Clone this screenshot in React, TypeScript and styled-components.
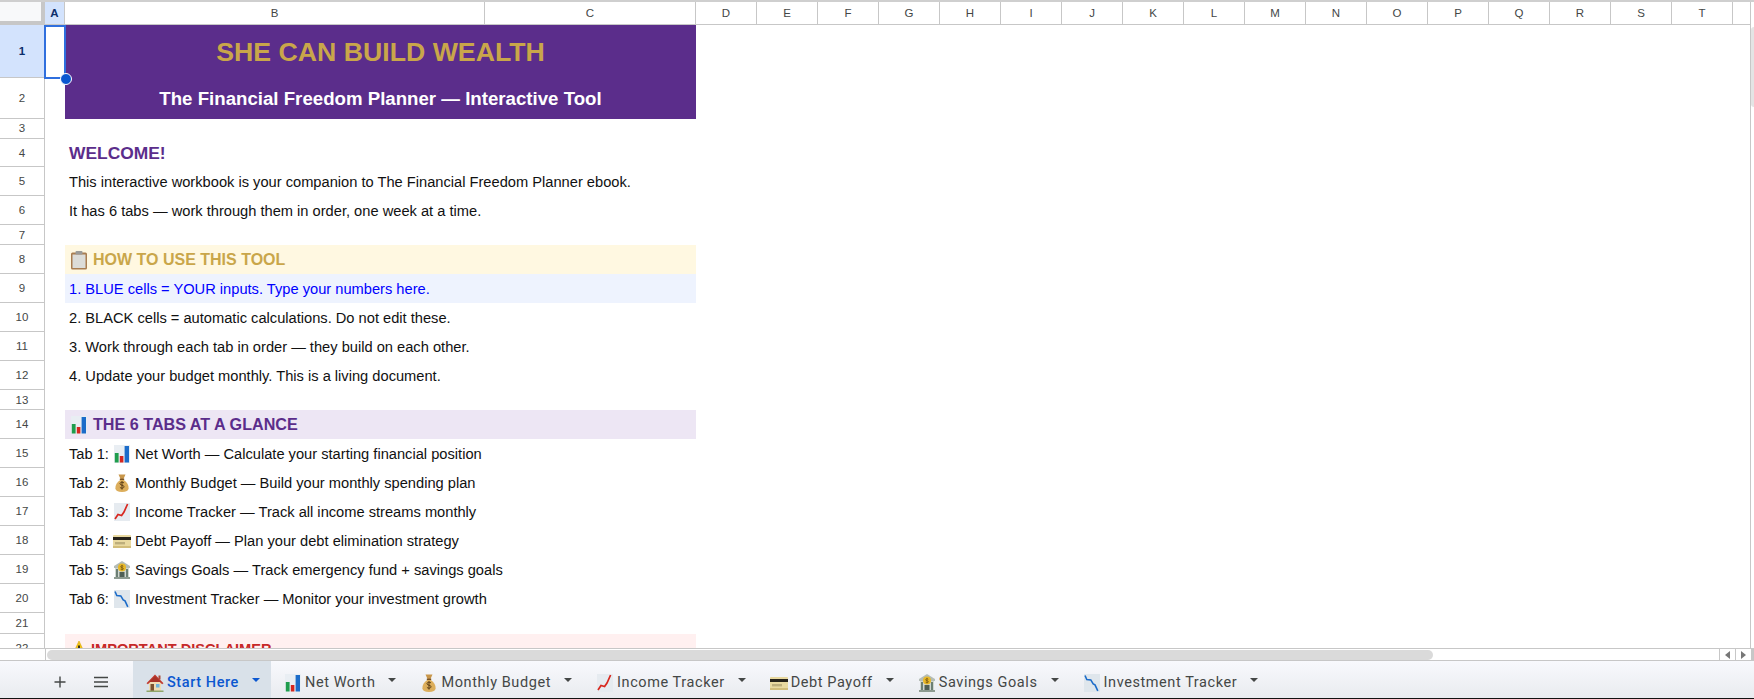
import React from "react";
import styled, { createGlobalStyle } from "styled-components";

const Global = createGlobalStyle`
  html, body { margin: 0; padding: 0; background: #fff; overflow: hidden; }
  * { box-sizing: border-box; }
`;

const Frame = styled.div`
  width: 1754px;
  height: 699px;
  display: flex;
  flex-direction: column;
  font-family: "Liberation Sans", Arial, sans-serif;
  background: #fff;
  overflow: hidden;
`;

const SheetArea = styled.div`
  height: 648px;
  display: flex;
  border-top: 2px solid #cfcfcf;
`;

const SheetMain = styled.div`
  width: 1750px;
  display: flex;
  flex-direction: column;
  position: relative;
  overflow: hidden;
`;

const VScroll = styled.div`
  width: 4px;
  border-left: 1px solid #c7c7c7;
  padding-top: 25px;
`;

const VThumb = styled.div`
  width: 3px;
  height: 80px;
  background: #e4e4e4;
  border-radius: 3px 0 0 3px;
`;

const ColHeader = styled.div`
  height: 23px;
  flex: none;
  display: grid;
  grid-template-columns: 45px 20px 420px 211px repeat(17, 61px) 1fr;
  border-bottom: 1px solid #c7c7c7;
`;

const Corner = styled.div`
  background: #f8f9fa;
  border-right: 4px solid #c7c7c7;
  border-bottom: 4px solid #c7c7c7;
  margin-bottom: -1px;
`;

const ColCell = styled.div<{ $active?: boolean }>`
  display: flex;
  align-items: center;
  justify-content: center;
  border-right: 1px solid #c7c7c7;
  font-size: 11.5px;
  color: ${(p) => (p.$active ? "#0b2e6b" : "#444746")};
  font-weight: ${(p) => (p.$active ? 700 : 400)};
  background: ${(p) => (p.$active ? "#d3e3fd" : "#fff")};
`;

const Body = styled.div`
  flex: 1;
  min-height: 0;
  overflow: hidden;
`;

const Row = styled.div<{ $h: number }>`
  height: ${(p) => p.$h}px;
  display: flex;
`;

const RowNum = styled.div<{ $active?: boolean }>`
  width: 45px;
  flex: none;
  display: flex;
  align-items: center;
  justify-content: center;
  border-right: 1px solid #c7c7c7;
  border-bottom: 1px solid #c7c7c7;
  font-size: 11.5px;
  color: ${(p) => (p.$active ? "#0b2e6b" : "#444746")};
  font-weight: ${(p) => (p.$active ? 700 : 400)};
  background: ${(p) => (p.$active ? "#d3e3fd" : "#fff")};
`;

const ColA = styled.div`
  width: 20px;
  flex: none;
`;

type Tone = "plain" | "input" | "gold" | "purple" | "red" | "banner";

const fills: Record<Tone, string> = {
  plain: "transparent",
  input: "#eef3fe",
  gold: "#fff8e1",
  purple: "#ede6f4",
  red: "#fff0f0",
  banner: "#5b2d8b",
};

const Cell = styled.div<{ $tone?: Tone }>`
  width: 631px;
  flex: none;
  display: flex;
  align-items: center;
  padding-left: 4px;
  white-space: nowrap;
  font-size: 14.66px;
  color: ${(p) => (p.$tone === "input" ? "#0000ff" : "#111")};
  background: ${(p) => fills[p.$tone ?? "plain"]};
`;

const TitleCell = styled(Cell)`
  justify-content: center;
  padding: 1px 0 0;
  font-weight: 700;
  font-size: 26.7px;
  color: #c9a64a;
`;

const SubCell = styled(TitleCell)`
  font-size: 18.66px;
  color: #fff;
`;

const Welcome = styled.span`
  margin-top: 1px;
  font-weight: 700;
  font-size: 17.4px;
  color: #5b2d8b;
`;

const Heading = styled.span<{ $color: string; $size?: number; $gap?: number }>`
  display: inline-flex;
  align-items: center;
  gap: ${(p) => p.$gap ?? 4}px;
  font-weight: 700;
  font-size: ${(p) => p.$size ?? 16}px;
  color: ${(p) => p.$color};
`;

const Inline = styled.span`
  display: inline-flex;
  align-items: center;
  gap: 3px;
`;

const Selection = styled.div`
  position: absolute;
  left: 44px;
  top: 23px;
  width: 22px;
  height: 54px;
  border: 2px solid #2f6fde;
  pointer-events: none;
`;

const Handle = styled.div`
  position: absolute;
  left: 60px;
  top: 71px;
  width: 12px;
  height: 12px;
  border-radius: 50%;
  background: #0b57d0;
  border: 1px solid #fff;
`;

const HScroll = styled.div`
  height: 13px;
  flex: none;
  display: flex;
  align-items: stretch;
  border-top: 1px solid #c7c7c7;
  border-bottom: 1px solid #c7c7c7;
`;

const HGutter = styled.div`
  width: 46px;
  flex: none;
  border-right: 1px solid #c7c7c7;
`;

const HTrack = styled.div`
  flex: 1;
  display: flex;
  align-items: stretch;
`;

const HThumb = styled.div`
  width: 1386px;
  background: #dadada;
  border-radius: 6px;
  margin: 1px 0 0 1px;
`;

const HButton = styled.div`
  width: 16px;
  flex: none;
  display: flex;
  align-items: center;
  justify-content: center;
  border-left: 1px solid #c7c7c7;
`;

const HEnd = styled.div`
  width: 3px;
  background: #c7c7c7;
`;

const Tri = styled.span<{ $dir: "left" | "right" }>`
  width: 0;
  height: 0;
  border-top: 4px solid transparent;
  border-bottom: 4px solid transparent;
  ${(p) => (p.$dir === "left" ? "border-right: 5px solid #777;" : "border-left: 5px solid #777;")}
`;

const TabBar = styled.div`
  flex: 1;
  min-height: 0;
  display: flex;
  align-items: stretch;
  background: linear-gradient(#f8f9fd, #e9ebef);
  border-bottom: 1px solid #111;
`;

const TabTools = styled.div`
  width: 133px;
  flex: none;
  display: flex;
  align-items: center;
  padding: 4px 0 0 53px;
  gap: 27px;
  color: #444746;
`;

const Tab = styled.div<{ $active?: boolean }>`
  display: flex;
  align-items: center;
  padding: 6px 11px 0 12px;
  font-family: Roboto, "Noto Sans", sans-serif;
  font-size: 14.5px;
  letter-spacing: 0.58px;
  font-weight: ${(p) => (p.$active ? 500 : 400)};
  color: ${(p) => (p.$active ? "#0b57d0" : "#444746")};
  background: ${(p) => (p.$active ? "#d9e1e9" : "transparent")};
  white-space: nowrap;
`;

const TabLabel = styled.span`
  margin-left: 2px;
`;

const Caret = styled.span<{ $active?: boolean }>`
  margin-left: 13px;
  margin-top: -5px;
  width: 0;
  height: 0;
  border-left: 4px solid transparent;
  border-right: 4px solid transparent;
  border-top: 4px solid ${(p) => (p.$active ? "#0b57d0" : "#444746")};
`;

const Svg = ({ children }: { children: React.ReactNode }) => (
  <svg width={20} height={20} viewBox="0 0 20 20" style={{ flex: "none" }}>
    {children}
  </svg>
);

const BarsIcon = () => (
  <Svg>
    <rect x="2" y="1" width="16" height="18" fill="#e9eef3" />
    <rect x="2.8" y="9" width="3.8" height="9.5" fill="#1f9d4d" />
    <rect x="7.8" y="12" width="3.6" height="6.5" fill="#d6261f" />
    <rect x="12.6" y="2" width="4.4" height="16.5" fill="#1c6cc9" />
  </Svg>
);

const BagIcon = () => (
  <Svg>
    <path d="M6.5 1.5h7l-2 4.600H8.500z" fill="#c8964a" />
    <rect x="7.800" y="5.600" width="4.400" height="1.400" fill="#7a5424" />
    <path d="M8.200 7C5 9.400 3.200 12.200 3.400 15.200c.2 2.600 2.400 3.800 6.600 3.800s6.400-1.200 6.600-3.800c.2-3-1.600-5.800-4.800-8.200z" fill="#dcae5c" />
    <path d="M12 10c-.5-.6-1.200-.8-2-.8-1.200 0-2 .6-2 1.500 0 2 4 1 4 3 0 .9-.9 1.500-2 1.500-.9 0-1.600-.3-2.100-.9M10 8.200v8.400" fill="none" stroke="#5a3d16" strokeWidth="1" />
  </Svg>
);

const UpIcon = () => (
  <Svg>
    <rect x="2" y="1" width="16" height="18" fill="#e6ebf0" />
    <path d="M3 17l3-4.500 3.600 1 2.400-3.500 3.600-8" fill="none" stroke="#d8281f" strokeWidth="1.700" />
  </Svg>
);

const DownIcon = () => (
  <Svg>
    <rect x="2" y="1" width="16" height="18" fill="#dfe6ec" />
    <path d="M3 2.500l1.800 4 4 .4 2.400 4 1.800 1 2.800 6" fill="none" stroke="#1c6cc9" strokeWidth="1.600" />
  </Svg>
);

const CardIcon = () => (
  <Svg>
    <rect x="1" y="4" width="18" height="13" rx="1" fill="#e9d9a0" />
    <rect x="1" y="6" width="18" height="3" fill="#26221a" />
    <rect x="3" y="11" width="10" height="2.400" fill="#bdae7c" />
    <rect x="1" y="15" width="18" height="2" fill="#d2bd7b" />
  </Svg>
);

const BankIcon = () => (
  <Svg>
    <path d="M10 1L2 6v2h16V6z" fill="#b4bcb6" />
    <rect x="3" y="8" width="14" height="9" fill="#cfd6cf" />
    <rect x="4" y="9" width="2" height="8" fill="#6c7f74" />
    <rect x="14" y="9" width="2" height="8" fill="#6c7f74" />
    <rect x="7.500" y="12" width="5" height="5" fill="#4f5f55" />
    <rect x="2" y="17" width="16" height="2" fill="#8d9a90" />
    <circle cx="10" cy="7.500" r="4" fill="#e8b828" />
    <path d="M11.300 6.300c-.9-.8-2.700-.6-2.700.5 0 1.300 2.800.6 2.800 1.900 0 1.100-1.800 1.300-2.800.5M10 4.900v5.200" fill="none" stroke="#6a4d10" strokeWidth=".7" />
  </Svg>
);

const HouseIcon = () => (
  <Svg>
    <rect x="13.500" y="2.500" width="2" height="4" fill="#a84a3a" />
    <rect x="4" y="9" width="12" height="9" fill="#efdcb4" />
    <path d="M10 1.500L1.500 10.300l1.400 1L10 4.500l7.100 6.800 1.400-1z" fill="#c23b30" />
    <path d="M10 3L4 9h12z" fill="#a83228" />
    <rect x="5.500" y="11" width="3.500" height="7" fill="#7c5230" />
    <rect x="11" y="11" width="3.500" height="3.500" fill="#6fb3dc" />
    <rect x="1.500" y="17.500" width="17" height="1.500" fill="#8fa56a" />
  </Svg>
);

const ClipIcon = () => (
  <Svg>
    <rect x="2" y="2.500" width="16" height="17" rx="1.500" fill="#a97d50" />
    <rect x="3.500" y="4.500" width="13" height="13.500" fill="#dcdcd8" />
    <rect x="6.500" y="1" width="7" height="3.500" rx="1" fill="#9a9a98" />
  </Svg>
);

const WarnIcon = () => (
  <Svg>
    <path d="M10 2L3 17h14z" fill="#f5c518" stroke="#d9a400" strokeWidth=".6" />
    <rect x="9.100" y="6.500" width="1.800" height="6" fill="#222" />
    <circle cx="10" cy="14.500" r="1.100" fill="#222" />
  </Svg>
);

const columns = "DEFGHIJKLMNOPQRST".split("");

const tabRows: [string, React.ReactNode, string][] = [
  ["Tab 1:", <BarsIcon key="1" />, "Net Worth — Calculate your starting financial position"],
  ["Tab 2:", <BagIcon key="2" />, "Monthly Budget — Build your monthly spending plan"],
  ["Tab 3:", <UpIcon key="3" />, "Income Tracker — Track all income streams monthly"],
  ["Tab 4:", <CardIcon key="4" />, "Debt Payoff — Plan your debt elimination strategy"],
  ["Tab 5:", <BankIcon key="5" />, "Savings Goals — Track emergency fund + savings goals"],
  ["Tab 6:", <DownIcon key="6" />, "Investment Tracker — Monitor your investment growth"],
];

const sheetTabs: [React.ReactNode, string][] = [
  [<HouseIcon key="h" />, "Start Here"],
  [<BarsIcon key="b" />, "Net Worth"],
  [<BagIcon key="m" />, "Monthly Budget"],
  [<UpIcon key="i" />, "Income Tracker"],
  [<CardIcon key="d" />, "Debt Payoff"],
  [<BankIcon key="s" />, "Savings Goals"],
  [<DownIcon key="t" />, "Investment Tracker"],
];

const Line = ({ n, h = 29, tone, children }: { n: number; h?: number; tone?: Tone; children?: React.ReactNode }) => (
  <Row $h={h}>
    <RowNum>{n}</RowNum>
    <ColA />
    <Cell $tone={tone}>{children}</Cell>
  </Row>
);

export default function App() {
  return (
    <Frame>
      <Global />
      <SheetArea>
        <SheetMain>
          <ColHeader>
            <Corner />
            <ColCell $active>A</ColCell>
            <ColCell>B</ColCell>
            <ColCell>C</ColCell>
            {columns.map((c) => (
              <ColCell key={c}>{c}</ColCell>
            ))}
          </ColHeader>
          <Body>
            <Row $h={53}>
              <RowNum $active>1</RowNum>
              <ColA />
              <TitleCell $tone="banner">SHE CAN BUILD WEALTH</TitleCell>
            </Row>
            <Row $h={40.7}>
              <RowNum>2</RowNum>
              <ColA />
              <SubCell $tone="banner">The Financial Freedom Planner — Interactive Tool</SubCell>
            </Row>
            <Line n={3} h={20} />
            <Line n={4} h={28.7}>
              <Welcome>WELCOME!</Welcome>
            </Line>
            <Line n={5}>This interactive workbook is your companion to The Financial Freedom Planner ebook.</Line>
            <Line n={6}>It has 6 tabs — work through them in order, one week at a time.</Line>
            <Line n={7} h={20} />
            <Line n={8} tone="gold">
              <Heading $color="#c9a64a">
                <ClipIcon />
                HOW TO USE THIS TOOL
              </Heading>
            </Line>
            <Line n={9} tone="input">1. BLUE cells = YOUR inputs. Type your numbers here.</Line>
            <Line n={10}>2. BLACK cells = automatic calculations. Do not edit these.</Line>
            <Line n={11}>3. Work through each tab in order — they build on each other.</Line>
            <Line n={12}>4. Update your budget monthly. This is a living document.</Line>
            <Line n={13} h={20} />
            <Line n={14} tone="purple">
              <Heading $color="#5b2d8b" $size={16.15}>
                <BarsIcon />
                THE 6 TABS AT A GLANCE
              </Heading>
            </Line>
            {tabRows.map(([label, icon, text], i) => (
              <Line key={label} n={15 + i}>
                <Inline>
                  {label} {icon} {text}
                </Inline>
              </Line>
            ))}
            <Line n={21} h={21} />
            <Line n={22} tone="red">
              <Heading $color="#c62828" $size={14.6} $gap={2}>
                <WarnIcon />
                IMPORTANT DISCLAIMER
              </Heading>
            </Line>
          </Body>
          <Selection />
          <Handle />
        </SheetMain>
        <VScroll>
          <VThumb />
        </VScroll>
      </SheetArea>
      <HScroll>
        <HGutter />
        <HTrack>
          <HThumb />
        </HTrack>
        <HButton>
          <Tri $dir="left" />
        </HButton>
        <HButton>
          <Tri $dir="right" />
        </HButton>
        <HEnd />
      </HScroll>
      <TabBar>
        <TabTools>
          <svg width="14" height="14" viewBox="0 0 14 14">
            <path d="M7 1.500v11M1.500 7h11" stroke="currentColor" strokeWidth="1.400" fill="none" />
          </svg>
          <svg width="14" height="12" viewBox="0 0 14 12">
            <path d="M0 1.500h14M0 6h14M0 10.500h14" stroke="currentColor" strokeWidth="1.500" fill="none" />
          </svg>
        </TabTools>
        {sheetTabs.map(([icon, name], i) => (
          <Tab key={name} $active={i === 0}>
            {icon}
            <TabLabel>{name}</TabLabel>
            <Caret $active={i === 0} />
          </Tab>
        ))}
      </TabBar>
    </Frame>
  );
}
